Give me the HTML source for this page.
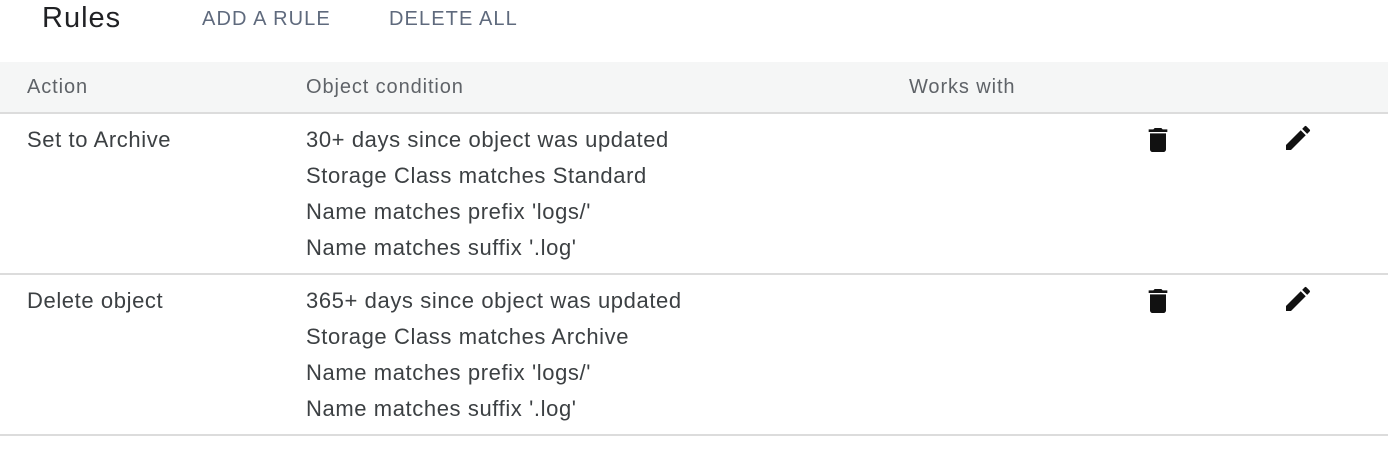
<!DOCTYPE html>
<html><head><style>
body{margin:0;width:1400px;height:450px;background:#fff;font-family:"Liberation Sans",sans-serif;position:relative;overflow:hidden}
.a{position:absolute;white-space:nowrap;line-height:36px}
.t{color:#3c4043;font-size:22px;letter-spacing:0.6px}
.h{color:#5f6368;font-size:20px;letter-spacing:0.9px}
.b{color:#5f6a7d;font-size:20px;letter-spacing:1.1px}
</style></head><body>
<div class="a" style="left:42px;top:0;font-size:29px;color:#202124;letter-spacing:1px">Rules</div>
<div class="a b" style="left:202px;top:1px">ADD A RULE</div>
<div class="a b" style="left:389px;top:1px">DELETE ALL</div>
<div style="position:absolute;left:0;top:62px;width:1388px;height:50px;background:#f5f6f6;border-bottom:2px solid #dcdcdc"></div>
<div class="a h" style="left:27px;top:69px">Action</div>
<div class="a h" style="left:306px;top:69px">Object condition</div>
<div class="a h" style="left:909px;top:69px">Works with</div>

<div class="a t" style="left:27px;top:122px">Set to Archive</div>
<div class="a t" style="left:306px;top:122px">30+ days since object was updated<br>Storage Class matches Standard<br>Name matches prefix 'logs/'<br>Name matches suffix '.log'</div>
<div style="position:absolute;left:0;top:273px;width:1388px;height:2px;background:#dcdcdc"></div>
<div class="a t" style="left:27px;top:283px">Delete object</div>
<div class="a t" style="left:306px;top:283px">365+ days since object was updated<br>Storage Class matches Archive<br>Name matches prefix 'logs/'<br>Name matches suffix '.log'</div>
<div style="position:absolute;left:0;top:434px;width:1388px;height:2px;background:#dcdcdc"></div>

<svg style="position:absolute;left:1142px;top:124px" width="32" height="32" viewBox="0 0 24 24"><path d="M6 19c0 1.1.9 2 2 2h8c1.1 0 2-.9 2-2V7H6v12zM19 4h-3.5l-1-1h-5l-1 1H5v2h14V4z" fill="#111"/></svg>
<svg style="position:absolute;left:1282px;top:122px" width="32" height="32" viewBox="0 0 24 24"><path d="M3 17.25V21h3.75L17.81 9.94l-3.75-3.75L3 17.25zM20.71 7.040a1 1 0 0 0 0-1.41l-2.34-2.34a1 1 0 0 0-1.41 0l-1.83 1.83 3.75 3.75 1.83-1.83z" fill="#111"/></svg>
<svg style="position:absolute;left:1142px;top:285px" width="32" height="32" viewBox="0 0 24 24"><path d="M6 19c0 1.1.9 2 2 2h8c1.1 0 2-.9 2-2V7H6v12zM19 4h-3.5l-1-1h-5l-1 1H5v2h14V4z" fill="#111"/></svg>
<svg style="position:absolute;left:1282px;top:283px" width="32" height="32" viewBox="0 0 24 24"><path d="M3 17.25V21h3.75L17.81 9.94l-3.75-3.75L3 17.25zM20.71 7.04a1 1 0 0 0 0-1.41l-2.34-2.34a1 1 0 0 0-1.41 0l-1.83 1.83 3.75 3.75 1.83-1.83z" fill="#111"/></svg>
</body></html>
